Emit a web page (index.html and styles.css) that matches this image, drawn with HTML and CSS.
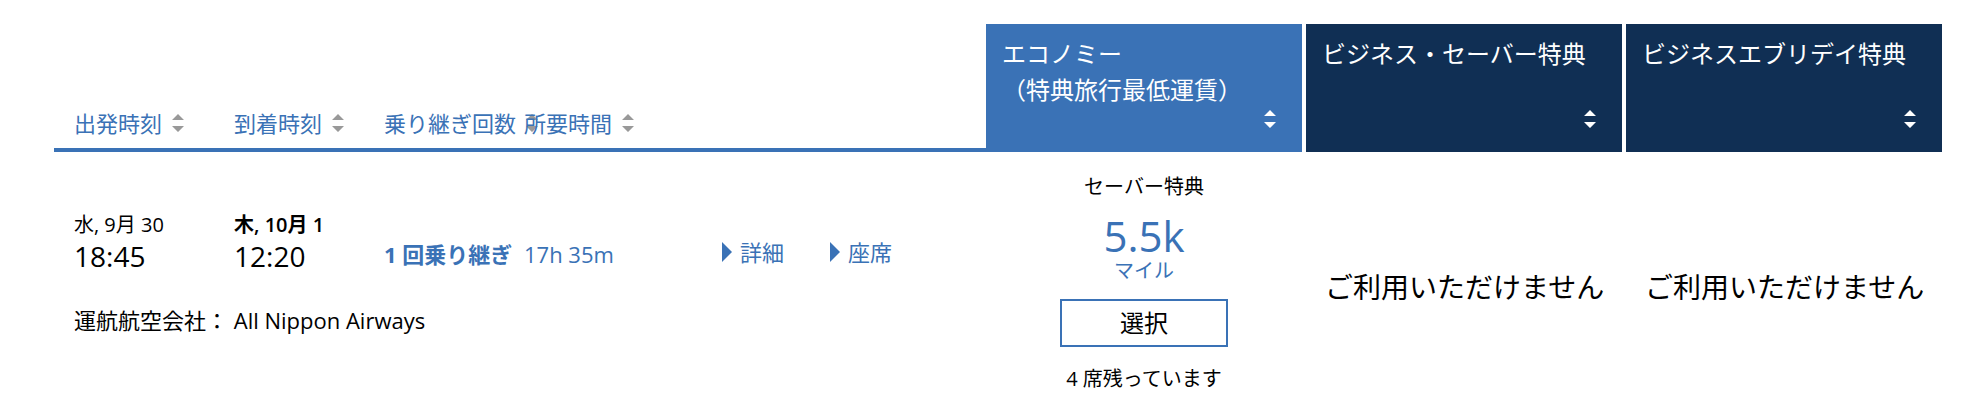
FILE: index.html
```html
<!DOCTYPE html>
<html lang="ja">
<head>
<meta charset="utf-8">
<title>フライト検索結果</title>
<link rel="stylesheet" href="styles.css">
</head>
<body>
<svg class="defs" aria-hidden="true">
  <symbol id="sort" viewBox="0 0 12 18"><path d="M6 0l6 6H0zM0 12h12l-6 6z"/></symbol>
  <symbol id="arrow" viewBox="0 0 10 20"><path d="M0 0l10 10L0 20z"/></symbol>
</svg>
<main class="results">
  <table class="flights">
    <colgroup>
      <col class="col-depart"><col class="col-arrive"><col class="col-stops"><col class="col-duration">
      <col class="col-details"><col class="col-seats">
      <col class="col-fare"><col class="col-fare"><col class="col-fare-last">
    </colgroup>
    <thead>
      <tr>
        <th class="head" scope="col"><button class="sort" type="button">出発時刻<svg class="sort-icon"><use href="#sort"/></svg></button></th>
        <th class="head" scope="col"><button class="sort" type="button">到着時刻<svg class="sort-icon"><use href="#sort"/></svg></button></th>
        <th class="head" scope="col"><button class="sort" type="button">乗り継ぎ回数<svg class="sort-icon"><use href="#sort"/></svg></button></th>
        <th class="head" scope="col"><button class="sort" type="button">所要時間<svg class="sort-icon"><use href="#sort"/></svg></button></th>
        <td class="head" colspan="2"></td>
        <th class="fare-head economy" scope="col"><button class="fare-sort" type="button"><span>エコノミー<br>（特典旅行最低運賃）</span><svg class="sort-icon"><use href="#sort"/></svg></button></th>
        <th class="fare-head" scope="col"><button class="fare-sort" type="button"><span>ビジネス・セーバー特典</span><svg class="sort-icon"><use href="#sort"/></svg></button></th>
        <th class="fare-head last" scope="col"><button class="fare-sort" type="button"><span>ビジネスエブリデイ特典</span><svg class="sort-icon"><use href="#sort"/></svg></button></th>
      </tr>
    </thead>
    <tbody>
      <tr>
        <td class="info"><div class="date">水, 9月 30</div><div class="time">18:45</div></td>
        <td class="info"><div class="date next-day">木, 10月 1</div><div class="time">12:20</div></td>
        <td class="info"><a class="link stops" href="#stops">1 回乗り継ぎ</a></td>
        <td class="info"><span class="link">17h 35m</span></td>
        <td class="info"><a class="link toggle" href="#details"><svg class="arrow"><use href="#arrow"/></svg>詳細</a></td>
        <td class="info"><a class="link toggle" href="#seats"><svg class="arrow"><use href="#arrow"/></svg>座席</a></td>
        <td class="fare" rowspan="2">
          <div class="offer">
            <div class="note">セーバー特典</div>
            <div class="price">5.5k</div>
            <div class="unit">マイル</div>
            <button class="select" type="button">選択</button>
            <div class="note">4 席残っています</div>
          </div>
        </td>
        <td class="unavailable" rowspan="2">ご利用いただけません</td>
        <td class="unavailable last" rowspan="2">ご利用いただけません</td>
      </tr>
      <tr>
        <td class="airline" colspan="6"><span class="airline-label">運航航空会社：</span> All Nippon Airways</td>
      </tr>
    </tbody>
  </table>
</main>
</body>
</html>
```
FILE: styles.css
```css
* { box-sizing: border-box; }

body {
  margin: 0;
  background: #fff;
  color: #000;
  font-family: "Open Sans", "Noto Sans CJK JP", sans-serif;
  font-size: 22px;
  line-height: 32px;
}

button {
  border: 0;
  background: none;
  font: inherit;
  cursor: pointer;
}

.defs { position: absolute; width: 0; height: 0; }

.results { padding: 24px 28px 0 54px; }

.flights {
  width: 100%;
  table-layout: fixed;
  border-spacing: 0;
}

.col-depart { width: 160px; }
.col-arrive { width: 150px; }
.col-stops { width: 140px; }
.col-duration { width: 198px; }
.col-details { width: 108px; }
.col-fare { width: 320px; }
.col-fare-last { width: 316px; }

th, td { padding: 0; text-align: left; font-weight: 400; }

.head {
  padding: 0 0 9px 20px;
  border-bottom: 4px solid #3a72b6;
  vertical-align: bottom;
}

.sort {
  display: flex;
  align-items: center;
  gap: 10px;
  padding: 0;
  color: #3a72b6;
  white-space: nowrap;
}

.sort-icon {
  flex: none;
  width: 12px;
  height: 18px;
  fill: #999;
}

.fare-head {
  height: 128px;
  border-right: 4px solid transparent;
  background: #102f54;
  background-clip: padding-box;
}

.economy { background-color: #3a72b6; }
.last { border-right: 0; }

.fare-sort {
  display: flex;
  flex-direction: column;
  justify-content: space-between;
  width: 100%;
  height: 128px;
  padding: 12px 26px 24px 16px;
  color: #fff;
  font-size: 24px;
  line-height: 36px;
  text-align: left;
  white-space: nowrap;
}

.fare-sort .sort-icon { align-self: flex-end; fill: #fff; }

.info {
  padding: 60px 0 30px 20px;
  vertical-align: bottom;
  white-space: nowrap;
}

.date { font-size: 20px; line-height: 26px; }
.next-day { font-weight: 600; }
.time { font-size: 28px; line-height: 36px; }

.link {
  display: block;
  padding-bottom: 4px;
  color: #3a72b6;
  text-decoration: none;
}

.stops { font-weight: 700; }

.toggle { display: flex; align-items: center; gap: 8px; padding-bottom: 6px; }
.arrow { width: 10px; height: 20px; fill: #3a72b6; }

.airline { padding: 0 0 70px 20px; vertical-align: top; }
.airline-label { display: inline-block; }

.fare { padding: 19px 4px 0 0; vertical-align: top; }

.offer {
  display: flex;
  flex-direction: column;
  align-items: center;
}

.note { font-size: 20px; }
.price { padding-top: 10px; color: #3a72b6; font-size: 42px; line-height: 46px; }
.unit { color: #3a72b6; font-size: 20px; line-height: 24px; }

.select {
  width: 168px;
  height: 48px;
  margin: 16px 0;
  padding: 0;
  border: 2px solid #3a72b6;
  background: #fff;
  color: #000;
  font-size: 24px;
}

.unavailable {
  padding: 16px 0 0 19px;
  font-size: 28px;
  vertical-align: middle;
  white-space: nowrap;
}
```
